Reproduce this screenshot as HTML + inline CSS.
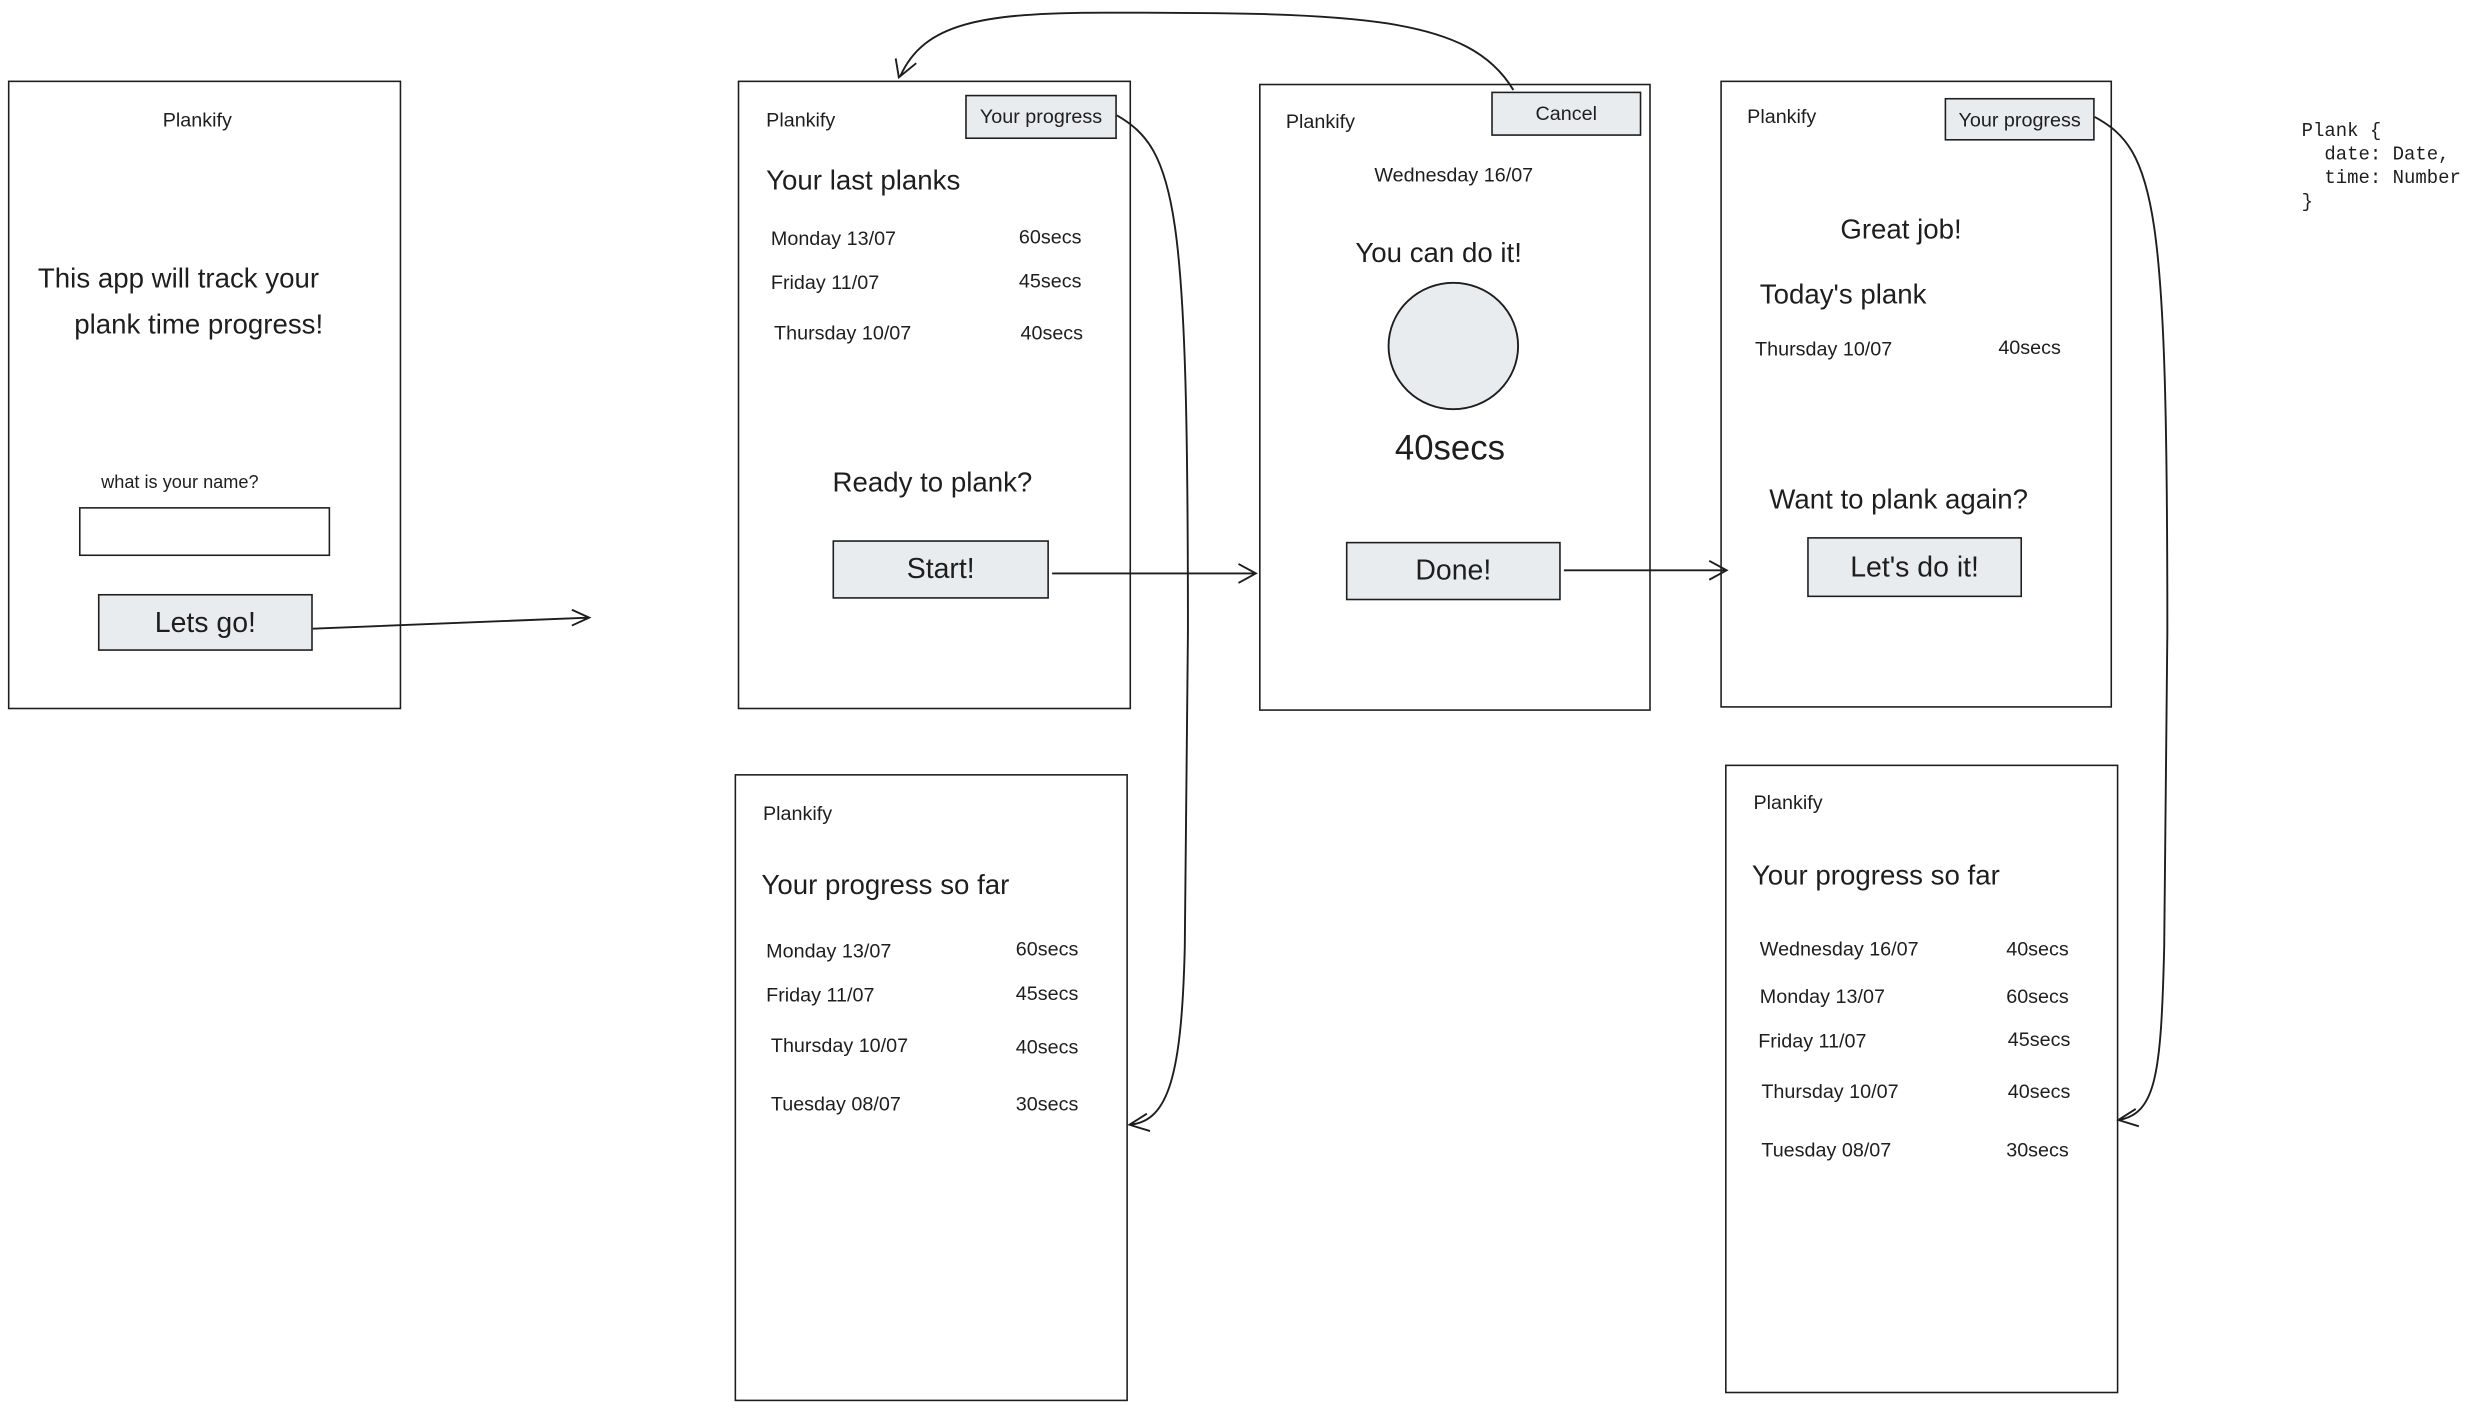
<!DOCTYPE html>
<html><head><meta charset="utf-8"><style>
html,body{margin:0;padding:0;background:#fff;width:2477px;height:1413px;overflow:hidden}
#s{position:absolute;left:0;top:0;width:1568px;height:895px;transform:scale(1.5797);transform-origin:0 0;font-family:"Liberation Sans",sans-serif;color:#1e1e1e}
.f{position:absolute;border:1.3px solid #1e1e1e;box-sizing:border-box;background:#fff}
.t{position:absolute;white-space:nowrap;font-size:12.5px;line-height:1}
.h{font-size:17.5px}
.b{position:absolute;border:1.3px solid #1e1e1e;box-sizing:border-box;background:#e9ecef;display:flex;align-items:center;justify-content:center;font-size:16px}
.sm{font-size:12.5px}
</style></head><body><div id="s">

<div class="f" style="left:5px;top:51px;width:249px;height:398px"></div>
<div class="t" style="left:103px;top:70px">Plankify</div>
<div class="t h" style="left:24px;top:168px">This app will track your</div>
<div class="t h" style="left:47px;top:197px">plank time progress!</div>
<div class="t" style="left:64px;top:301px;font-size:11.5px">what is your name?</div>
<div class="f" style="left:50px;top:321px;width:159px;height:31px"></div>
<div class="b" style="left:62px;top:376px;width:136px;height:36px;font-size:18px">Lets go!</div>

<div class="f" style="left:467px;top:51px;width:249px;height:398px"></div>
<div class="t" style="left:485px;top:70px">Plankify</div>
<div class="b sm" style="left:611px;top:60px;width:96px;height:28px">Your progress</div>
<div class="t h" style="left:485px;top:106px">Your last planks</div>
<div class="t" style="left:488px;top:145px">Monday 13/07</div><div class="t" style="left:645px;top:144px">60secs</div>
<div class="t" style="left:488px;top:173px">Friday 11/07</div><div class="t" style="left:645px;top:172px">45secs</div>
<div class="t" style="left:490px;top:205px">Thursday 10/07</div><div class="t" style="left:646px;top:205px">40secs</div>
<div class="t h" style="left:527px;top:297px">Ready to plank?</div>
<div class="b" style="left:527px;top:342px;width:137px;height:37px;font-size:18px">Start!</div>

<div class="f" style="left:797px;top:53px;width:248px;height:397px"></div>
<div class="t" style="left:814px;top:71px">Plankify</div>
<div class="b sm" style="left:944px;top:58px;width:95px;height:28px">Cancel</div>
<div class="t" style="left:870px;top:105px">Wednesday 16/07</div>
<div class="t h" style="left:858px;top:152px">You can do it!</div>
<div class="t" style="left:883px;top:273px;font-size:22px">40secs</div>
<div class="b" style="left:852px;top:343px;width:136px;height:37px;font-size:18px">Done!</div>

<div class="f" style="left:1089px;top:51px;width:248px;height:397px"></div>
<div class="t" style="left:1106px;top:68px">Plankify</div>
<div class="b sm" style="left:1231px;top:62px;width:95px;height:27px">Your progress</div>
<div class="t h" style="left:1165px;top:137px">Great job!</div>
<div class="t h" style="left:1114px;top:178px">Today's plank</div>
<div class="t" style="left:1111px;top:215px">Thursday 10/07</div><div class="t" style="left:1265px;top:214px">40secs</div>
<div class="t h" style="left:1120px;top:308px">Want to plank again?</div>
<div class="b" style="left:1144px;top:340px;width:136px;height:38px;font-size:18px">Let's do it!</div>

<div class="f" style="left:465px;top:490px;width:249px;height:397px"></div>
<div class="t" style="left:483px;top:509px">Plankify</div>
<div class="t h" style="left:482px;top:552px">Your progress so far</div>
<div class="t" style="left:485px;top:596px">Monday 13/07</div><div class="t" style="left:643px;top:595px">60secs</div>
<div class="t" style="left:485px;top:624px">Friday 11/07</div><div class="t" style="left:643px;top:623px">45secs</div>
<div class="t" style="left:488px;top:656px">Thursday 10/07</div><div class="t" style="left:643px;top:657px">40secs</div>
<div class="t" style="left:488px;top:693px">Tuesday 08/07</div><div class="t" style="left:643px;top:693px">30secs</div>

<div class="f" style="left:1092px;top:484px;width:249px;height:398px"></div>
<div class="t" style="left:1110px;top:502px">Plankify</div>
<div class="t h" style="left:1109px;top:546px">Your progress so far</div>
<div class="t" style="left:1114px;top:595px">Wednesday 16/07</div><div class="t" style="left:1270px;top:595px">40secs</div>
<div class="t" style="left:1114px;top:625px">Monday 13/07</div><div class="t" style="left:1270px;top:625px">60secs</div>
<div class="t" style="left:1113px;top:653px">Friday 11/07</div><div class="t" style="left:1271px;top:652px">45secs</div>
<div class="t" style="left:1115px;top:685px">Thursday 10/07</div><div class="t" style="left:1271px;top:685px">40secs</div>
<div class="t" style="left:1115px;top:722px">Tuesday 08/07</div><div class="t" style="left:1270px;top:722px">30secs</div>

<div class="t" style="left:1457px;top:76px;font-family:'Liberation Mono',monospace;font-size:12px;line-height:15px;white-space:pre">Plank {
  date: Date,
  time: Number
}</div>

<svg width="1568" height="895" style="position:absolute;left:0;top:0" fill="none" stroke="#1e1e1e" stroke-width="1.2">
<path d="M198 398 L372 391 M362 386 L373 391 L362 396"/>
<path d="M666 363 L795 363 M784 357 L795 363 L784 369"/>
<path d="M990 361 L1093 361 M1082 355 L1093 361 L1082 367"/>
<path d="M958 57 C930 10 860 8 700 8 C620 8 585 15 570 48 M567 37 L569 49 L580 40"/>
<path d="M707 73 C745 95 752 130 752 400 L750 600 C748 680 740 710 715 712 M726 705 L715 712 L728 716"/>
<path d="M1326 74 C1365 95 1372 130 1372 400 L1370 600 C1368 680 1365 705 1341 709 M1352 702 L1341 709 L1354 713"/>
<ellipse cx="920" cy="219" rx="41" ry="40" fill="#e9ecef"/>
</svg>
</div></body></html>
